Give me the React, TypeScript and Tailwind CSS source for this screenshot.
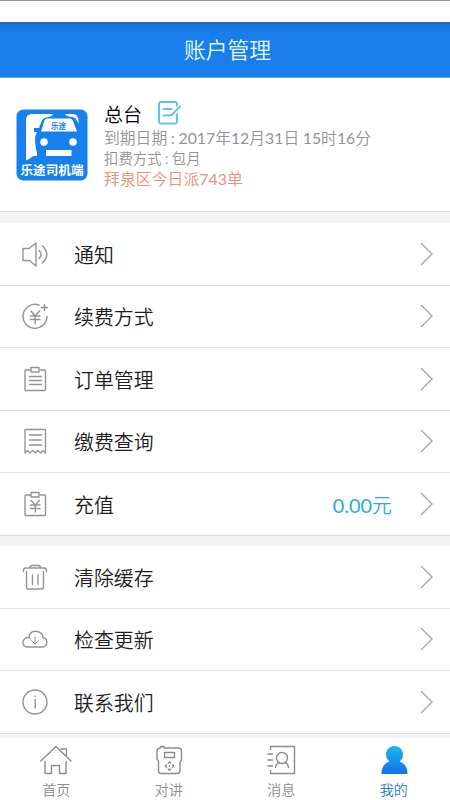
import type { ReactNode } from 'react';

const stroke = { fill: 'none', stroke: 'currentColor', strokeWidth: 1.4, strokeLinecap: 'round', strokeLinejoin: 'round' } as const;

function Icon({ children }: { children: ReactNode }) {
  return (
    <svg className="h-7 w-7 shrink-0 text-[#949494]" viewBox="0 0 28 28" {...stroke}>
      {children}
    </svg>
  );
}

const icons = {
  speaker: (
    <Icon>
      <path d="M2 8.500h6L15 3v23l-6.500-5.500H2zM18 10.500q4 4 0 8M21.500 6q8.500 8.500 0 17" />
    </Icon>
  ),
  renew: (
    <Icon>
      <path d="M18 3A12 12 0 1 0 26 14.500M20.500 5.500h6M23.500 2.500v6M10 9l4.200 5L18.500 9M9.500 14h9.500M9.500 17.500h9.500M14.200 14v7.500" />
    </Icon>
  ),
  clipboard: (
    <Icon>
      <path d="M9 5H5q-1 0-1 1v18.500q0 1 1 1h18.500q1 0 1-1V6q0-1-1-1h-4M10 2.500h8v4.500h-8zM8.500 11.500h12M8.500 15.500h12M8.500 19.500h12" />
    </Icon>
  ),
  receipt: (
    <Icon>
      <path d="M4 26V3.500q0-1 1-1h18.500q1 0 1 1V26l-2.500-2.500-2.500 2.500-2.500-2.500-2.700 2.500-2.700-2.500L9 26l-2.500-2.500zM8.500 8h12M8.500 13h12M8.500 18h12" />
    </Icon>
  ),
  recharge: (
    <Icon>
      <path d="M9 5H5q-1 0-1 1v18.500q0 1 1 1h18.500q1 0 1-1V6q0-1-1-1h-4M10 2.500h8v4.500h-8zM10 10.500l4.200 4.500 4.300-4.500M9.500 15h9.500M9.500 18.500h9.500M14.300 15v7" />
    </Icon>
  ),
  trash: (
    <Icon>
      <path d="M2.500 8.500V7.500Q2.500 5 5 5h18q2.500 0 2.500 2.500v1M9 5q0-2.500 2-2.500h6.500q2 0 2 2.500M5.500 8.500v15.500q0 2 2 2h13q2 0 2-2V8.500M11.500 12v9.500M17 12v9.500" />
    </Icon>
  ),
  cloud: (
    <Icon>
      <path d="M6.500 22h15a4.700 4.700 0 0 0 .5-9.300C22 9 18.500 6.200 14.500 6.200c-3.500 0-6 2.300-6.500 5.800-.3.300.3 1 1 1.500M8 12.500C4.500 12 2 14.500 2 17.500 2 20 4 22 6.500 22" />
      <path strokeWidth="1" d="M14 12v7M10.500 15.500L14 19l3.500-3.500" />
    </Icon>
  ),
  info: (
    <Icon>
      <circle cx="14" cy="14" r="12" />
      <path d="M14.200 11.500v8.500M14.200 8v.5" />
    </Icon>
  ),
};

function Num({ children }: { children: string }) {
  return <span className="font-['Lato'] font-normal">{children}</span>;
}

function Row({ icon, label, value, last }: { icon: ReactNode; label: string; value?: string; last?: boolean }) {
  return (
    <div className={`flex items-center border-[#dfdfdf] pl-[21px] pr-[17px] ${last ? 'h-[62px]' : 'h-[62.500px] border-b'}`}>
      {icon}
      <span className="ml-[25px] mt-[2px] flex-1 text-[19.900px] leading-7 text-[#1d1d1d]">{label}</span>
      {value && (
        <span className="mr-[28px] mt-[2px] text-[19.900px] leading-7 text-[#2fa9d6]">
          <Num>{value}</Num>元
        </span>
      )}
      <svg className="h-6 w-[13px]" viewBox="0 0 13 24" fill="none" stroke="#a6a6a6" strokeWidth="1.400">
        <path d="M1 1l11 11L1 23" />
      </svg>
    </div>
  );
}

function Logo() {
  return (
    <svg className="h-[72px] w-[72px] shrink-0" viewBox="0 0 72 72">
      <rect x=".5" y=".5" width="71" height="71" rx="7" fill="#1580ee" />
      <path d="M16 5h21q-1 3-7 3.500-3 .5-4.500 4L23 19h-5v4h3q-2.500 4-2 9 .5 7 2 12v3q-4-1-7 2.500l-4 2V11q0-6 6-6z" fill="#fff" />
      <path d="M49 5h8q5.500 0 5.500 7v3q-2-6-6-7-6-.5-7.500-3z" fill="#fff" />
      <path d="M31 9.500h23q2 0 2.800 2L61 22.500H25l3.500-11q.7-2 2.500-2z" fill="#fff" />
      <circle cx="28" cy="33" r="3.800" fill="#fff" />
      <circle cx="57" cy="33" r="3.800" fill="#fff" />
      <rect x="30" y="41" width="25.500" height="6" fill="#fff" />
      <text x="35" y="19.700" textLength="15" lengthAdjust="spacingAndGlyphs" fontSize="7.500" fontWeight="700" fill="#1580ee">乐途</text>
      <text x="4.500" y="66" textLength="63" lengthAdjust="spacingAndGlyphs" fontSize="12.500" fontWeight="700" fill="#fff">乐途司机端</text>
    </svg>
  );
}

function Tab({ label, active, children }: { label: string; active?: boolean; children: ReactNode }) {
  return (
    <div className={`flex flex-1 flex-col items-center pt-[6px] ${active ? 'text-[#2a7ac9]' : 'text-[#8c8c8c]'}`}>
      <svg className="h-8 w-8" viewBox="0 0 32 32" {...stroke}>{children}</svg>
      <span className="mt-[3px] text-[14px] leading-5">{label}</span>
    </div>
  );
}

export default function App() {
  return (
    <div className="flex h-[800px] w-[450px] flex-col overflow-hidden bg-[#f3f3f3] font-['Noto_Sans_CJK_SC',sans-serif] font-[350]">
      <div className="h-[22px] shrink-0 border-t border-[#929292] bg-white" />
      <header className="flex h-14 shrink-0 items-center justify-center border-b border-[#65a9ef] bg-[linear-gradient(#2765b0_0px,#1b75d8_3px,#197eea_12px,#187fed_100%)] pl-[5px] text-[21.800px] text-[#e9fbff]">
        账户管理
      </header>
      <section className="flex h-[134px] shrink-0 border-b border-[#dedede] bg-white pl-4 pt-[31px]">
        <Logo />
        <div className="ml-[16px] -mt-[8px] text-[#939393]">
          <div className="flex h-[26px] items-center text-[19px] text-black">
            <span>总台</span>
            <svg className="ml-[16px] mb-[2px] h-6 w-6" viewBox="0 0 24 24" fill="none" stroke="#5dc3ec" strokeWidth="1.900" strokeLinecap="round" strokeLinejoin="round">
              <path d="M19 4.500V3q0-2-2-2H3Q1 1 1 3v17.500q0 2 2 2h14q2 0 2-2V13M5.500 8h8M5.500 14.500h5M22 5.500l-8.500 8.500-3 .5" />
            </svg>
          </div>
          <div className="h-[21px] whitespace-nowrap text-[15.800px] leading-[21px]">
            到期日期 : <Num>2017</Num>年<Num>12</Num>月<Num>31</Num>日 <Num>15</Num>时<Num>16</Num>分
          </div>
          <div className="h-5 text-[14.400px] leading-5">扣费方式 : 包月</div>
          <div className="h-[22px] text-[15.900px] leading-[22px] text-[#e6917c]">
            拜泉区今日派<Num>743</Num>单
          </div>
        </div>
      </section>
      <section className="mt-[11px] shrink-0 border-b border-[#dedede] bg-white">
        <Row icon={icons.speaker} label="通知" />
        <Row icon={icons.renew} label="续费方式" />
        <Row icon={icons.clipboard} label="订单管理" />
        <Row icon={icons.receipt} label="缴费查询" />
        <Row icon={icons.recharge} label="充值" value="0.00" last />
      </section>
      <section className="mt-[10px] shrink-0 border-b border-[#dedede] bg-white">
        <Row icon={icons.trash} label="清除缓存" />
        <Row icon={icons.cloud} label="检查更新" />
        <Row icon={icons.info} label="联系我们" last />
      </section>
      <nav className="mt-auto flex h-[62px] shrink-0 bg-white">
        <Tab label="首页">
          <path d="M.8 17L16 2.500 31 17M5 17.500v12h6.500V21.500h8v8h6.500v-12M21 5h5.500v6.500" />
        </Tab>
        <Tab label="对讲">
          <path d="M7.500 4V2.500h3.500V4h14.500q3 0 3 3v8q0 1.500-1.500 3v8.500q0 3-3 3H8q-2.500 0-2.500-3V18q0-1.500-1.500-3V7q0-3 3.500-3zM11.500 8.500h10v5h-10z" />
          <path strokeWidth="1.300" d="M15.300 19l1.200-1.200 1.200 1.200M15.300 25l1.200 1.200 1.200-1.200M13.500 20.800L12.300 22l1.200 1.200M19.500 20.800l1.200 1.200-1.200 1.200M16.500 21.500v1" />
        </Tab>
        <Tab label="消息">
          <path d="M5.500 5.500v-3h24v27h-24v-3M3 10h4.500M3 16h4.500M3 22h4.500" />
          <circle cx="17" cy="14" r="5.500" />
          <path d="M10.500 23.500q.5-4 4-5M19.500 18.500q3.500 1 4 5" />
        </Tab>
        <Tab label="我的" active>
          <defs>
            <linearGradient id="person" x1="0" y1="0" x2="0" y2="1">
              <stop offset="0" stopColor="#19b9ef" />
              <stop offset="1" stopColor="#176fe8" />
            </linearGradient>
          </defs>
          <path fill="url(#person)" stroke="none" d="M16.500 2C21.500 2 25 6 25 10.500c0 3-1.500 5.500-3.500 7 5 1.500 8 5.500 8 12.500h-26c0-7 3-11 8-12.500-2-1.500-3.500-4-3.500-7C8 6 11.500 2 16.500 2z" />
        </Tab>
      </nav>
    </div>
  );
}
